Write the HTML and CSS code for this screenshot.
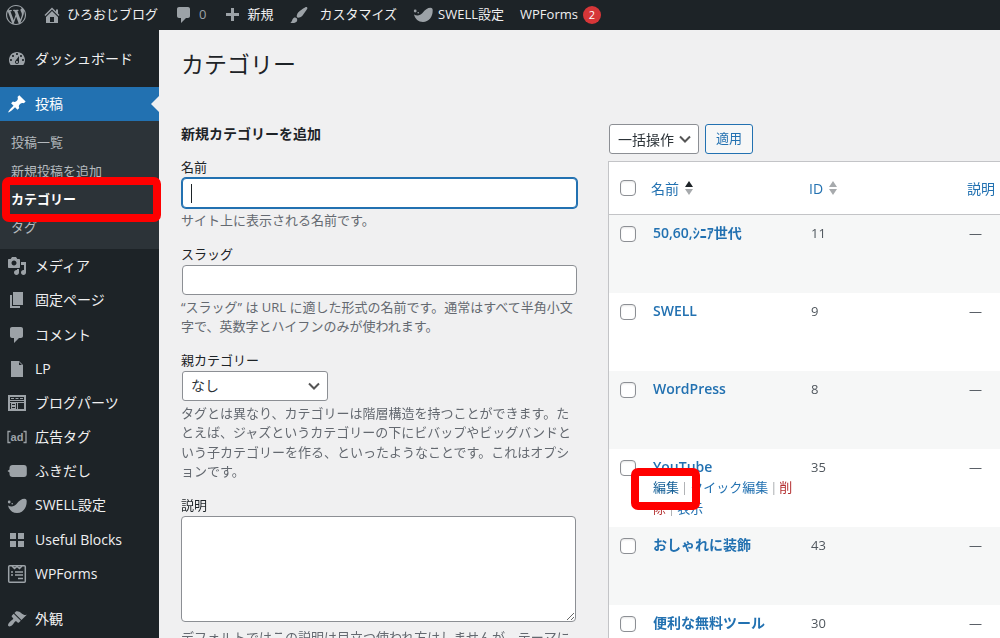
FILE: index.html
```html
<!DOCTYPE html>
<html lang="ja">
<head>
<meta charset="utf-8">
<title>カテゴリー ‹ ひろおじブログ</title>
<link rel="stylesheet" href="styles.css">
</head>
<body>
<header class="adminbar">
  <a class="bar-item bar-logo" href="#" aria-label="WordPress"><svg class="icon" viewBox="0 0 20 20"><path d="M20 10c0-5.51-4.49-10-10-10C4.48 0 0 4.49 0 10c0 5.52 4.48 10 10 10 5.51 0 10-4.48 10-10zM7.78 15.37L4.37 6.22c.55-.02 1.17-.08 1.17-.08.5-.06.44-1.13-.06-1.11 0 0-1.45.11-2.37.11-.18 0-.37 0-.58-.01C4.12 2.69 6.87 1.11 10 1.11c2.33 0 4.45.87 6.05 2.34-.68-.11-1.65.39-1.65 1.58 0 .74.45 1.36.9 2.1.35.61.55 1.36.55 2.46 0 1.49-1.4 5-1.4 5l-3.03-8.37c.54-.02.82-.17.82-.17.5-.05.44-1.25-.06-1.22 0 0-1.44.12-2.38.12-.87 0-2.33-.12-2.33-.12-.5-.03-.56 1.2-.06 1.22l.92.08 1.26 3.41zM17.41 10c.24-.64.74-1.87.43-4.25.7 1.29 1.05 2.71 1.05 4.25 0 3.29-1.73 6.24-4.4 7.78.97-2.59 1.94-5.2 2.92-7.78zM6.1 18.09C3.12 16.65 1.11 13.53 1.11 10c0-1.3.23-2.48.72-3.59C3.25 10.3 4.67 14.2 6.1 18.09zm4.03-6.63l2.58 6.98c-.86.29-1.76.45-2.71.45-.79 0-1.57-.11-2.29-.33.81-2.38 1.62-4.74 2.42-7.1z"/></svg></a>
  <a class="bar-item" href="#"><svg class="icon" viewBox="0 0 20 20"><path d="M16 8.5l1.53 1.53-1.06 1.06L10 4.6l-6.47 6.49-1.06-1.06L10 2.5l4 4v-2h2v4zm-6-2.46l6 5.99V18H4v-5.97zM12 17v-5H8v5h4z"/></svg>ひろおじブログ</a>
  <a class="bar-item bar-count" href="#"><svg class="icon" viewBox="0 0 20 20"><path d="M5 2h9c1.1 0 2 .9 2 2v7c0 1.1-.9 2-2 2h-2l-5 5v-5H5c-1.1 0-2-.9-2-2V4c0-1.1.9-2 2-2z"/></svg>0</a>
  <a class="bar-item" href="#"><svg class="icon" viewBox="0 0 20 20"><path d="M17 8v3h-5v5H9v-5H4V8h5V3h3v5h5z"/></svg>新規</a>
  <a class="bar-item bar-customize" href="#"><svg class="icon" viewBox="0 0 20 20"><path d="M18.33 3.57s.27-.8-.31-1.36c-.53-.52-1.22-.24-1.22-.24-.61.3-5.76 3.47-7.67 5.57-.86.96-2.06 3.79-1.09 4.82.92.98 3.96-.17 4.79-1 2.06-2.06 5.21-7.17 5.5-7.79zM1.4 17.65c2.37-1.56 1.46-3.41 3.23-4.64.93-.65 2.22-.62 3.08.29.63.67.8 2.57-.16 3.46-1.57 1.45-4 1.55-6.15.89z"/></svg>カスタマイズ</a>
  <a class="bar-item" href="#"><svg class="icon" viewBox="0 0 20 20"><path d="M1 9.5c3 1.700 6.200 1.200 8.500-1.500C12 4.800 14.500 2.800 17.500 2.800c1.600 0 2.200 1 2.200 2.800 0 6.600-4 11.400-9.700 11.400-4.600 0-8-3-9-7.500z"/><circle cx="2.200" cy="6" r="1.400"/><circle cx="5.200" cy="7.800" r=".8"/></svg>SWELL設定</a>
  <a class="bar-item" href="#">WPForms<span class="bar-badge">2</span></a>
</header>

<div class="layout">
  <nav class="sidebar" aria-label="メインメニュー">
    <ul class="menu">
      <li><a class="menu-link" href="#"><svg class="icon" viewBox="0 0 20 20"><path d="M3.760 16h12.480c1.100-1.370 1.760-3.110 1.760-5 0-4.420-3.580-8-8-8s-8 3.580-8 8c0 1.890.66 3.630 1.760 5zM10 4c.55 0 1 .45 1 1s-.45 1-1 1-1-.45-1-1 .45-1 1-1zM6 6c.55 0 1 .45 1 1s-.45 1-1 1-1-.45-1-1 .45-1 1-1zm8 0c.55 0 1 .45 1 1s-.45 1-1 1-1-.45-1-1 .45-1 1-1zm-5.370 5.550L12 7v6c0 1.100-.9 2-2 2s-2-.9-2-2c0-.57.24-1.080.63-1.450zM4 10c.55 0 1 .45 1 1s-.45 1-1 1-1-.45-1-1 .45-1 1-1zm12 0c.55 0 1 .45 1 1s-.45 1-1 1-1-.45-1-1 .45-1 1-1zm-5 3c0-.55-.45-1-1-1s-1 .45-1 1 .45 1 1 1 1-.45 1-1z"/></svg>ダッシュボード</a></li>
      <li class="menu-group">
        <a class="menu-link menu-current" href="#"><svg class="icon" viewBox="0 0 20 20"><path d="M10.440 3.020l1.820-1.820 6.360 6.350-1.830 1.820c-1.050-.68-2.480-.57-3.410.36l-.75.75c-.92.93-1.040 2.350-.35 3.410l-1.830 1.820-2.410-2.410-2.800 2.790c-.42.42-3.380 2.710-3.800 2.290s1.860-3.390 2.280-3.810l2.790-2.790L4.100 9.360l1.830-1.820c1.050.69 2.480.57 3.400-.36l.75-.75c.93-.92 1.050-2.350.36-3.410z"/></svg>投稿</a>
        <ul class="submenu">
          <li><a class="submenu-link" href="#">投稿一覧</a></li>
          <li><a class="submenu-link" href="#">新規投稿を追加</a></li>
          <li class="submenu-marked"><a class="submenu-link submenu-current" href="#">カテゴリー</a></li>
          <li><a class="submenu-link" href="#">タグ</a></li>
        </ul>
      </li>
      <li><a class="menu-link" href="#"><svg class="icon" viewBox="0 0 20 20"><path d="M13 11V4c0-.55-.45-1-1-1h-1.670L9 1H5L3.670 3H2c-.55 0-1 .45-1 1v7c0 .55.45 1 1 1h10c.55 0 1-.45 1-1zM7 4.500c1.380 0 2.500 1.120 2.500 2.500S8.380 9.500 7 9.500 4.500 8.380 4.500 7 5.620 4.500 7 4.500zM14 6h5v10.500c0 1.380-1.120 2.500-2.500 2.500S14 17.880 14 16.500s1.120-2.500 2.500-2.500c.17 0 .34.02.5.05V9h-3V6zm-4 8.050V13h2v3.500c0 1.380-1.120 2.500-2.500 2.500S7 17.880 7 16.500 8.120 14 9.500 14c.17 0 .34.02.5.05z"/></svg>メディア</a></li>
      <li><a class="menu-link" href="#"><svg class="icon" viewBox="0 0 20 20"><path d="M6 15V2h10v13H6zm-1 1h8v2H3V5h2v11z"/></svg>固定ページ</a></li>
      <li><a class="menu-link" href="#"><svg class="icon" viewBox="0 0 20 20"><path d="M5 2h9c1.100 0 2 .9 2 2v7c0 1.100-.9 2-2 2h-2l-5 5v-5H5c-1.100 0-2-.9-2-2V4c0-1.100.9-2 2-2z"/></svg>コメント</a></li>
      <li><a class="menu-link" href="#"><svg class="icon" viewBox="0 0 20 20"><path d="M12 2l4 4v12H4V2h8zm0 4h3l-3-3v3z"/></svg>LP</a></li>
      <li><a class="menu-link" href="#"><svg class="icon" viewBox="0 0 20 20"><path fill-rule="evenodd" d="M1 2h18v16H1zM3 4v3h14V4zM3 8v1h14V8zM11 10v6h6v-6zM3 10v6h1v-6zM9 10v6h1v-6z"/><path d="M4 5h3v1H4zM8.500 5h3v1h-3zM13 5h3v1h-3z"/><path class="icon-cut" d="M5 11h3v1H5zM5 14h3v1H5z"/></svg>ブログパーツ</a></li>
      <li><a class="menu-link" href="#"><svg class="icon" viewBox="0 0 20 20" aria-hidden="true"><path d="M3.500 4.500H1v11h2.500M16.500 4.500H19v11h-2.500" fill="none" stroke="currentColor" stroke-width="1.300"/><text class="icon-ad" x="10" y="14" text-anchor="middle">ad</text></svg>広告タグ</a></li>
      <li><a class="menu-link" href="#"><svg class="icon" viewBox="0 0 20 20"><path d="M5.500 4H17c1.700 0 2.800 1.300 2.800 3v6c0 1.700-1.100 3-2.800 3H5.500c-1.700 0-3-1.300-3-3v-1.500L.5 10l2-1.500V7c0-1.700 1.300-3 3-3z"/></svg>ふきだし</a></li>
      <li><a class="menu-link" href="#"><svg class="icon" viewBox="0 0 20 20"><path d="M1 9.500c3 1.700 6.200 1.200 8.500-1.500C12 4.800 14.500 2.800 17.500 2.800c1.600 0 2.200 1 2.200 2.800 0 6.600-4 11.400-9.700 11.400-4.600 0-8-3-9-7.500z"/><circle cx="2.200" cy="6" r="1.400"/><circle cx="5.200" cy="7.800" r=".8"/></svg>SWELL設定</a></li>
      <li><a class="menu-link" href="#"><svg class="icon" viewBox="0 0 20 20"><path d="M3 3h6v6H3zM11 3h6v6h-6zM3 11h6v6H3zM11 11h6v6h-6z"/></svg>Useful Blocks</a></li>
      <li><a class="menu-link" href="#"><svg class="icon" viewBox="0 0 20 20"><g fill="none" stroke="currentColor" stroke-width="1.500"><rect x="1.700" y="1.700" width="16.600" height="16.600" rx="1"/><path d="M5 2l2.500 2.500L10 2.500l2.500 2L15 2M4 8h2M8 8h8M4 11h2M8 11h8M11 14.500h5"/></g></svg>WPForms</a></li>
      <li class="menu-group"><a class="menu-link" href="#"><svg class="icon" viewBox="0 0 20 20"><path d="M14.480 11.060L7.410 3.990l1.500-1.500c.5-.56 2.300-.47 3.510.32 1.210.8 1.430 1.280 2.910 2.100 1.180.64 2.450 1.260 4.450.85zm-.71.71L6.700 4.700 4.930 6.470c-.39.39-.39 1.020 0 1.410l1.060 1.060c.39.39.39 1.030 0 1.420-.6.6-1.430 1.110-2.210 1.690-.35.26-.7.53-1.010.84C1.430 14.230.4 16.080 1.400 17.070c.99 1 2.840-.03 4.180-1.360.31-.31.58-.66.85-1.020.57-.78 1.080-1.610 1.690-2.210.39-.39 1.020-.39 1.410 0l1.060 1.060c.39.39 1.020.39 1.410 0z"/></svg>外観</a></li>
    </ul>
  </nav>

  <main class="content">
    <h1 class="page-title">カテゴリー</h1>
    <div class="columns">
      <form class="add-form">
        <h2 class="form-title">新規カテゴリーを追加</h2>
        <div class="field">
          <label class="field-label" for="tag-name">名前</label>
          <input class="text-input" id="tag-name" type="text" autofocus>
          <p class="field-help">サイト上に表示される名前です。</p>
        </div>
        <div class="field">
          <label class="field-label" for="tag-slug">スラッグ</label>
          <input class="text-input" id="tag-slug" type="text">
          <p class="field-help">“スラッグ” は URL に適した形式の名前です。通常はすべて半角小文字で、英数字とハイフンのみが使われます。</p>
        </div>
        <div class="field">
          <label class="field-label" for="parent">親カテゴリー</label>
          <select class="select select-parent" id="parent"><option>なし</option></select>
          <p class="field-help">タグとは異なり、カテゴリーは階層構造を持つことができます。たとえば、ジャズというカテゴリーの下にビバップやビッグバンドという子カテゴリーを作る、といったようなことです。これはオプションです。</p>
        </div>
        <div class="field">
          <label class="field-label" for="tag-description">説明</label>
          <textarea class="textarea" id="tag-description"></textarea>
          <p class="field-help">デフォルトではこの説明は目立つ使われ方はしませんが、テーマに</p>
        </div>
      </form>

      <section class="list" aria-label="カテゴリー一覧">
        <div class="bulk">
          <select class="select select-bulk" aria-label="一括操作を選択"><option>一括操作</option></select>
          <button class="button" type="button">適用</button>
        </div>
        <table class="table">
          <thead>
            <tr>
              <th class="col-check"><input class="checkbox" type="checkbox" aria-label="すべて選択"></th>
              <th class="col-name"><a class="sort" href="#">名前<svg class="sort-icon" viewBox="0 0 8 14"><path class="sort-active" d="M4 0l4 6H0z"/><path class="sort-idle" d="M0 8h8l-4 6z"/></svg></a></th>
              <th class="col-id"><a class="sort" href="#">ID<svg class="sort-icon" viewBox="0 0 8 14"><path class="sort-idle" d="M4 0l4 6H0zM0 8h8l-4 6z"/></svg></a></th>
              <th><a class="sort" href="#">説明</a></th>
            </tr>
          </thead>
          <tbody>
            <tr><td class="col-check"><input class="checkbox" type="checkbox" aria-label="50,60,ｼﾆｱ世代を選択"></td><td><a class="row-title" href="#">50,60,ｼﾆｱ世代</a></td><td>11</td><td>—</td></tr>
            <tr><td class="col-check"><input class="checkbox" type="checkbox" aria-label="SWELLを選択"></td><td><a class="row-title" href="#">SWELL</a></td><td>9</td><td>—</td></tr>
            <tr><td class="col-check"><input class="checkbox" type="checkbox" aria-label="WordPressを選択"></td><td><a class="row-title" href="#">WordPress</a></td><td>8</td><td>—</td></tr>
            <tr><td class="col-check"><input class="checkbox" type="checkbox" aria-label="YouTubeを選択"></td><td><a class="row-title" href="#">YouTube</a><div class="row-actions"><a class="action action-marked" href="#">編集</a><span class="divider">|</span><a class="action" href="#">クイック編集</a><span class="divider">|</span><a class="action action-delete" href="#">削除</a><span class="divider">|</span><a class="action" href="#">表示</a></div></td><td>35</td><td>—</td></tr>
            <tr><td class="col-check"><input class="checkbox" type="checkbox" aria-label="おしゃれに装飾を選択"></td><td><a class="row-title" href="#">おしゃれに装飾</a></td><td>43</td><td>—</td></tr>
            <tr><td class="col-check"><input class="checkbox" type="checkbox" aria-label="便利な無料ツールを選択"></td><td><a class="row-title" href="#">便利な無料ツール</a></td><td>30</td><td>—</td></tr>
          </tbody>
        </table>
      </section>
    </div>
  </main>
</div>
</body>
</html>
```
FILE: styles.css
```css
* { box-sizing: border-box; }

html { overflow: hidden; }

body {
  margin: 0;
  height: 100vh;
  overflow: hidden;
  display: flex;
  flex-direction: column;
  background: #f0f0f1;
  color: #3c434a;
  font: 13px/1.5 "Open Sans", "Noto Sans CJK JP", sans-serif;
}

a { text-decoration: none; }
ul { list-style: none; margin: 0; padding: 0; }
input, select, textarea, button { font: inherit; margin: 0; }

.icon {
  width: 20px;
  height: 20px;
  flex: none;
  fill: currentColor;
  color: #9ca2a7;
}
.icon-cut { fill: #1d2327; }
.icon-ad { font: bold 11px "Liberation Sans", sans-serif; }

/* Admin bar */
.adminbar {
  flex: none;
  display: flex;
  align-items: center;
  gap: 16px;
  height: 30px;
  padding: 0 6px;
  background: #1d2327;
}
.bar-item {
  display: flex;
  align-items: center;
  gap: 5px;
  color: #f0f0f1;
  white-space: nowrap;
}
.bar-count { color: #9ca2a7; }
.bar-customize { gap: 10px; }
.bar-badge {
  min-width: 18px;
  height: 18px;
  border-radius: 9px;
  background: #d63638;
  color: #fff;
  font-size: 11px;
  line-height: 18px;
  text-align: center;
}

/* Side menu */
.layout { flex: 1; display: flex; min-height: 0; }
.sidebar {
  flex: none;
  width: 159px;
  padding-top: 12px;
  background: #1d2327;
}
.menu-group { margin-top: 11px; }
.menu-link {
  display: flex;
  align-items: center;
  gap: 8px;
  padding: 8px 7px;
  color: #f0f0f1;
  font-size: 14px;
  line-height: 1.3;
}
.menu-link .icon { margin: -1px 0; }
.menu-current {
  position: relative;
  background: #2271b1;
  color: #fff;
}
.menu-current .icon { color: #fff; }
.menu-current::after {
  content: "";
  position: absolute;
  top: 9px;
  right: 0;
  border: 8px solid transparent;
  border-left: 0;
  border-right-color: #f0f0f1;
}
.submenu { padding: 7px 0 8px; background: #2c3338; }
.submenu-link {
  display: block;
  padding: 5px 11px;
  color: #b4b9bd;
  line-height: 1.4;
}
.submenu-current { color: #fff; font-weight: 600; }
.submenu-marked { position: relative; }
.submenu-marked::after {
  content: "";
  position: absolute;
  inset: -8px -2px -9px 2px;
  z-index: 2;
  border: 8px solid #f00;
  border-radius: 7px;
  pointer-events: none;
}

/* Content */
.content { flex: 1; min-width: 0; padding: 16px 0 0 22px; }
.page-title {
  margin: 0;
  color: #1d2327;
  font-size: 23px;
  font-weight: 400;
  line-height: 36px;
}
.columns {
  display: grid;
  grid-template-columns: minmax(0, 397fr) minmax(0, 392fr);
  gap: 30px;
  margin-top: 42px;
}

.form-title {
  margin: 0 0 14px;
  color: #1d2327;
  font-size: 14px;
  font-weight: 600;
  line-height: 20px;
}
.field { margin-bottom: 14px; }
.field-label { display: block; color: #1d2327; line-height: 19px; }
.field-help { margin: 3px 0 0; color: #646970; }
.text-input {
  display: block;
  width: calc(100% - 2px);
  height: 30px;
  margin: 1px;
  padding: 0 8px;
  border: 1px solid #8c8f94;
  border-radius: 4px;
  background: #fff;
  color: #2c3338;
  font-size: 14px;
}
.text-input:focus {
  border-color: #2271b1;
  box-shadow: 0 0 0 1px #2271b1;
  outline: 0;
}
.text-input:focus:placeholder-shown,
.text-input:focus {
  caret-color: transparent;
  background: linear-gradient(#1d2327, #1d2327) 8px center / 1px 19px no-repeat #fff;
}
.select {
  height: 30px;
  padding: 0 24px 0 8px;
  border: 1px solid #8c8f94;
  border-radius: 3px;
  appearance: none;
  background: #fff url("data:image/svg+xml,%3Csvg xmlns='http://www.w3.org/2000/svg' viewBox='0 0 16 16'%3E%3Cpath d='M3 5.500l5 5 5-5' fill='none' stroke='%23555' stroke-width='2'/%3E%3C/svg%3E") no-repeat right 5px center / 16px;
  color: #2c3338;
  font-size: 14px;
}
.select-parent { display: block; width: 146px; margin: 1px; }
.textarea {
  display: block;
  width: calc(100% - 2px);
  height: 106px;
  margin: 1px 0 6px;
  padding: 2px 6px;
  border: 1px solid #8c8f94;
  border-radius: 4px;
  background: #fff;
}

.bulk { display: flex; gap: 6px; padding: 0 0 7px 1px; }
.button {
  height: 30px;
  padding: 0 10px;
  border: 1px solid #2271b1;
  border-radius: 3px;
  background: #f6f7f7;
  color: #2271b1;
}

.table {
  width: 100%;
  table-layout: fixed;
  border: 1px solid #c3c4c7;
  border-right: 0;
  border-spacing: 0;
  background: #fff;
}
.table .col-check { width: 34px; padding: 11px 0 0 11px; }
.col-name, .col-id { width: 158px; }
.table th {
  height: 53px;
  padding: 0 0 0 8px;
  border-bottom: 1px solid #c3c4c7;
  font-size: 14px;
  font-weight: 400;
  text-align: left;
  white-space: nowrap;
}
.table th.col-check { padding: 0 0 0 11px; }
.table td {
  height: 78px;
  padding: 8px 10px;
  color: #50575e;
  line-height: 20px;
  vertical-align: top;
}
.table tbody tr:nth-child(odd) { background: #f6f7f7; }
.checkbox {
  display: block;
  width: 16px;
  height: 16px;
  border: 1px solid #8c8f94;
  border-radius: 4px;
  appearance: none;
  background: #fff;
  box-shadow: inset 0 1px 2px #0000001a;
}
.sort {
  display: inline-flex;
  align-items: center;
  gap: 6px;
  color: #2271b1;
}
.sort-icon { width: 8px; height: 14px; }
.sort-active { fill: #1d2327; }
.sort-idle { fill: #a7aaad; }
.row-title {
  display: block;
  color: #2271b1;
  font-size: 14px;
  font-weight: 600;
}
.row-actions { margin-right: -8px; line-height: 21px; }
.action { color: #2271b1; }
.action-delete { color: #b32d2e; }
.divider { margin: 0 2px; color: #a7aaad; }
.action-marked { position: relative; color: #135e96; }
.action-marked::after {
  content: "";
  position: absolute;
  inset: -10px -21px -14px -22px;
  z-index: 1;
  border: 8px solid #f00;
  border-radius: 7px;
  pointer-events: none;
}
```
